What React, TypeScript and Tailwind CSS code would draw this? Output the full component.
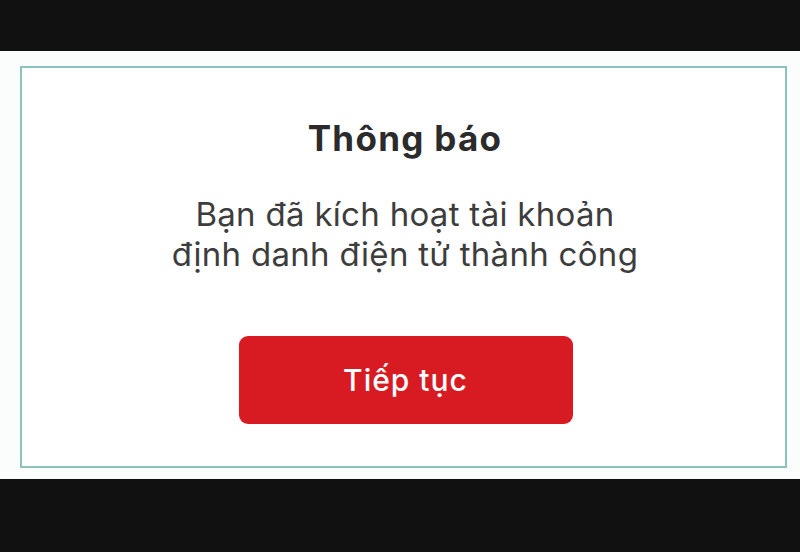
export default function App() {
  return (
    <div
      className="flex h-[552px] w-[800px] flex-col bg-[#111111]"
      style={{ fontFamily: 'Inter, "Noto Sans", sans-serif' }}
    >
      <div className="h-[51px] bg-[#111111]" />
      <div className="flex h-[428px] flex-col bg-[#fbfdfd] pb-[11px] pl-[20px] pr-[13px] pt-[15px]">
        <div className="flex flex-1 flex-col items-center border-2 border-[#8ac3bb] bg-white">
          <h1 className="mt-[50px] pl-[3px] text-[35px] font-bold leading-[40px] tracking-[1.3px] text-[#2b2b2b]">
            Thông báo
          </h1>
          <p className="mt-[36px] pl-[3px] text-center text-[33px] font-normal leading-[40px] tracking-[0.3px] text-[#3d3d3d]">
            Bạn đã kích hoạt tài khoản
            <br />
            định danh điện tử thành công
          </p>
          <button className="ml-[4px] mt-[62px] flex h-[88px] w-[334px] items-center justify-center rounded-[9px] bg-[#d81b22] text-[30px] font-medium tracking-[1px] text-white">
            Tiếp tục
          </button>
        </div>
      </div>
      <div className="flex-1 bg-[#111111]" />
    </div>
  );
}
